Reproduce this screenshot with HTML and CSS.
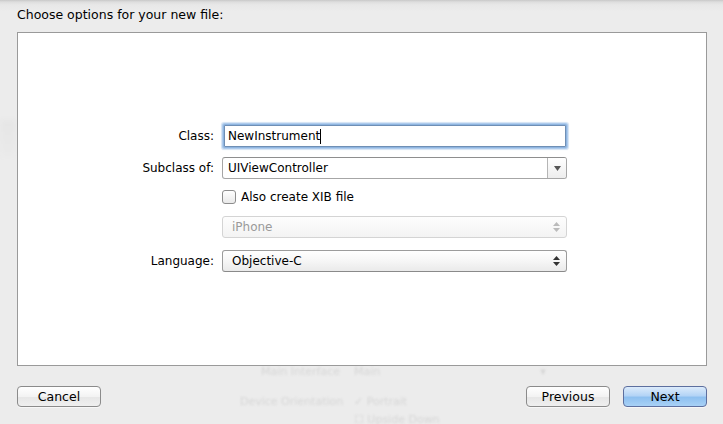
FILE: index.html
```html
<!DOCTYPE html>
<html>
<head>
<meta charset="utf-8">
<link rel="stylesheet" href="styles.css">
</head>
<body>
<div class="sheet">
  <div class="ghost ghost-left"></div>
  <div class="ghost ghost-bottom">
    <div class="ghost-row"><span class="ghost-label">Main Interface</span><span class="ghost-val">Main</span><span class="ghost-arrow">▾</span></div>
    <div class="ghost-row gr2"><span class="ghost-label">Device Orientation</span><span class="ghost-val">✓ Portrait</span></div>
    <div class="ghost-row gr3"><span class="ghost-label"></span><span class="ghost-val">☐ Upside Down</span></div>
  </div>

  <div class="title">Choose options for your new file:</div>

  <div class="panel">
    <div class="form">
      <div class="row r-class">
        <label class="lbl">Class:</label>
        <div class="field focus"><span class="val">NewInstrument</span><span class="caret"></span></div>
      </div>
      <div class="row r-sub">
        <label class="lbl">Subclass of:</label>
        <div class="combo">
          <span class="val">UIViewController</span>
          <span class="combo-btn"><svg width="7" height="5" viewBox="0 0 7 5"><path d="M0 0H7L3.5 5Z" fill="#555"/></svg></span>
        </div>
      </div>
      <div class="row r-check">
        <span class="lbl"></span>
        <label class="check"><span class="box"></span><span>Also create XIB file</span></label>
      </div>
      <div class="row r-dev">
        <span class="lbl"></span>
        <div class="popup disabled">
          <span class="val">iPhone</span>
          <svg class="updown" width="7" height="10" viewBox="0 0 7 10"><path d="M0 4H7L3.5 0Z M0 6H7L3.5 10Z" fill="#bbb"/></svg>
        </div>
      </div>
      <div class="row r-lang">
        <label class="lbl">Language:</label>
        <div class="popup">
          <span class="val dark">Objective-C</span>
          <svg class="updown" width="7" height="10" viewBox="0 0 7 10"><path d="M0 4H7L3.5 0Z M0 6H7L3.5 10Z" fill="#333"/></svg>
        </div>
      </div>
    </div>
  </div>

  <div class="buttons">
    <button class="btn">Cancel</button>
    <div class="spacer"></div>
    <button class="btn">Previous</button>
    <button class="btn primary">Next</button>
  </div>
</div>
</body>
</html>
```

FILE: styles.css
```css
html, body {
  margin: 0;
  padding: 0;
}
body {
  width: 723px;
  height: 424px;
  overflow: hidden;
  background: #ececec;
  font-family: "DejaVu Sans", "Lucida Grande", sans-serif;
  font-size: 12px;
  color: #000;
}
.sheet {
  position: relative;
  width: 723px;
  height: 424px;
  overflow: hidden;
  background: linear-gradient(#c8c8c8 0px, #dedede 2px, #e8e8e8 5px, #ececec 12px, #ececec 100%);
}
.title {
  height: 32px;
  padding-left: 17px;
  line-height: 30px;
  font-size: 12.5px;
  position: relative;
}
.panel {
  position: relative;
  margin-left: 17px;
  width: 688px;
  height: 332px;
  background: #fff;
  border: 1px solid #9a9a9a;
}
.form {
  padding-top: 91px;
  display: flex;
  flex-direction: column;
}
.row {
  display: flex;
  align-items: center;
}
.lbl {
  width: 196px;
  text-align: right;
  margin-right: 8px;
  flex: none;
}
.r-class { height: 24px; }
.r-sub { height: 22px; margin-top: 9px; }
.r-check { height: 20px; margin-top: 8px; }
.r-dev { height: 22px; margin-top: 9px; }
.r-lang { height: 22px; margin-top: 12px; }

.field {
  box-sizing: border-box;
  width: 342px;
  height: 22px;
  margin-left: 2px;
  border: 1px solid #6f8fb5;
  border-radius: 1px;
  box-shadow: 0 0 0 1px #8fb5e0, 0 0 0 2px #aecbec, 0 0 1px 3px #d3e3f4;
  background: #fff;
  display: flex;
  align-items: center;
  padding-left: 3px;
}
.caret {
  display: inline-block;
  width: 1px;
  height: 15px;
  background: #000;
}
.combo, .popup {
  box-sizing: border-box;
  width: 345px;
  height: 22px;
  border: 1px solid #a3a3a3;
  border-radius: 3px;
  display: flex;
  align-items: center;
  position: relative;
}
.combo {
  background: #fff;
  border-color: #a6a6a6;
  border-top-color: #8e8e8e;
  padding-left: 5px;
}
.combo .val { flex: 1; }
.combo-btn {
  width: 18px;
  height: 100%;
  border-left: 1px solid #b5b5b5;
  display: flex;
  align-items: center;
  justify-content: center;
  background: linear-gradient(#ffffff, #ededed);
  border-radius: 0 2px 2px 0;
}
.popup {
  background: linear-gradient(#ffffff 0%, #f6f6f6 50%, #eaeaea 100%);
  padding-left: 9px;
  border-color: #9c9c9c;
  border-bottom-color: #8a8a8a;
}
.popup .val { flex: 1; }
.popup.disabled {
  border-color: #d4d4d4;
  background: linear-gradient(#fdfdfd, #f3f3f3);
  color: #9a9a9a;
}
.updown {
  margin-right: 6px;
}
.check {
  display: flex;
  align-items: center;
  gap: 5px;
}
.box {
  box-sizing: border-box;
  width: 14px;
  height: 14px;
  border: 1px solid #8d8d8d;
  border-radius: 3px;
  background: linear-gradient(#ffffff, #e9e9e9);
  margin-left: 0;
}

.buttons {
  display: flex;
  align-items: center;
  padding: 0 16px 0 17px;
  margin-top: 20px;
  gap: 13px;
}
.spacer { flex: 1; }
.btn {
  box-sizing: border-box;
  width: 84px;
  height: 21px;
  border: 1px solid #8b8b8b;
  border-radius: 4px;
  background: linear-gradient(#ffffff 0%, #f3f3f3 50%, #e6e6e6 51%, #efefef 100%);
  font-family: "DejaVu Sans", "Lucida Grande", sans-serif;
  font-size: 12.5px;
  color: #000;
  padding: 0;
  box-shadow: 0 1px 0 rgba(255,255,255,0.6);
}
.btn.primary {
  border-color: #5d6f9f;
  background: linear-gradient(#dcebfb 0%, #b4d4f6 45%, #8ec0f0 55%, #a8d1f6 100%);
}

/* faded background content behind the sheet */
.ghost {
  position: absolute;
  filter: blur(1px);
  color: #d6d6d6;
  font-size: 11px;
  white-space: nowrap;
}
.ghost-left {
  left: 0;
  top: 120px;
  width: 16px;
  height: 36px;
  background: linear-gradient(#e6e6e6, #eaeaea);
  filter: blur(2px);
}
.ghost-bottom {
  left: 240px;
  top: 363px;
}
.ghost-row {
  display: flex;
  height: 16px;
  align-items: center;
}
.ghost-label {
  width: 100px;
  text-align: right;
  margin-right: 14px;
}
.ghost-arrow { margin-left: 160px; }
.gr2 { margin-top: 14px; }
.gr3 { margin-top: 2px; }
```
